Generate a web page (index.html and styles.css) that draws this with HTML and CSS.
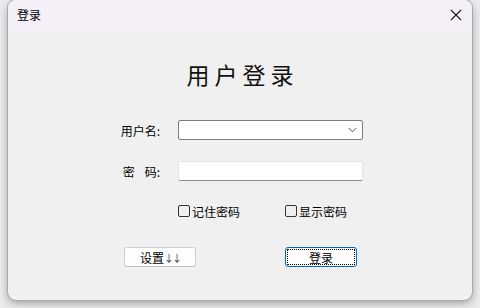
FILE: index.html
```html
<!DOCTYPE html>
<html lang="zh">
<head>
<meta charset="utf-8">
<link rel="stylesheet" href="styles.css">
</head>
<body>
<div class="window">
  <div class="titlebar">
    <span class="title-text">登录</span>
    <svg class="close" width="12" height="12" viewBox="0 0 12 12"><path d="M1 1L11 11M11 1L1 11" stroke="#1a1a1a" stroke-width="1.1"/></svg>
  </div>
  <div class="content">
    <div class="heading">用户登录</div>
    <div class="row row-user">
      <label class="label">用户名:</label>
      <div class="combo">
        <svg class="chev" width="9" height="6" viewBox="0 0 9 6"><path d="M0.5 0.8L4.5 4.8L8.5 0.8" fill="none" stroke="#555" stroke-width="1"/></svg>
      </div>
    </div>
    <div class="row row-pass">
      <label class="label">密<span class="gap"></span>码:</label>
      <div class="input"></div>
    </div>
    <div class="checks">
      <div class="check"><span class="box"></span><span>记住密码</span></div>
      <div class="check check2"><span class="box"></span><span>显示密码</span></div>
    </div>
    <div class="buttons">
      <div class="btn btn-set">设置<span class="arrows">↓↓</span></div>
      <div class="btn btn-login"><span class="focus">登录</span></div>
    </div>
  </div>
</div>
</body>
</html>
```
FILE: styles.css
```css
html, body {
  margin: 0;
  padding: 0;
  background: #ececec;
  width: 480px;
  height: 308px;
  overflow: hidden;
  font-family: "Noto Sans CJK SC", "DejaVu Sans", sans-serif;
}
.window {
  margin-left: 8px;
  width: 464px;
  height: 300px;
  border-radius: 8px;
  background: #f0f0f0;
  box-shadow: 0 0 0 1px #a9a9a9, 0 3px 10px rgba(0,0,0,0.35);
  overflow: hidden;
  display: flex;
  flex-direction: column;
}
.titlebar {
  height: 31px;
  background: #f5eff7;
  display: flex;
  align-items: center;
  justify-content: space-between;
  padding: 0 10px 0 9px;
  flex: none;
}
.title-text {
  font-size: 12px;
  color: #000;
  line-height: 1;
  margin-top: -1px;
}
.close {
  margin-top: -1px;
}
.content {
  flex: 1;
  display: flex;
  flex-direction: column;
}
.heading {
  margin-top: 28px;
  text-align: center;
  font-size: 23px;
  letter-spacing: 5px;
  padding-left: 5px;
  line-height: 30px;
  height: 30px;
  color: #111;
  font-family: "Noto Sans CJK SC", serif;
  font-weight: 400;
}
.row {
  display: flex;
  align-items: center;
  height: 20px;
}
.row-user { margin-top: 31px; }
.row-pass { margin-top: 21px; }
.label {
  width: 152px;
  text-align: right;
  font-size: 12px;
  color: #000;
  margin-right: 18px;
  display: flex;
  justify-content: flex-end;
}
.gap {
  display: inline-block;
  width: 10px;
}
.combo {
  width: 185px;
  height: 20px;
  box-sizing: border-box;
  border: 1px solid #7c7c7c;
  border-radius: 2px;
  background: #fff;
  display: flex;
  align-items: center;
  justify-content: flex-end;
  padding-right: 5px;
}
.chev { display: block; }
.input {
  width: 185px;
  height: 20px;
  box-sizing: border-box;
  background: #fff;
  border: 1px solid #e2e2e2;
  border-bottom-color: #8a8a8a;
  border-radius: 2px;
}
.checks {
  display: flex;
  margin-top: 23px;
  padding-left: 170px;
  height: 14px;
  align-items: center;
}
.check {
  display: flex;
  align-items: center;
  font-size: 12px;
  color: #000;
  width: 107px;
}
.box {
  border: 1px solid #333;
  border-radius: 2px;
  margin-right: 2px;
  box-sizing: border-box;
  width: 12px;
  height: 12px;
}
.buttons {
  display: flex;
  margin-top: 29px;
  padding-left: 116px;
}
.btn {
  height: 20px;
  box-sizing: border-box;
  border-radius: 3px;
  font-size: 12px;
  display: flex;
  align-items: center;
  justify-content: center;
  color: #000;
}
.btn-set {
  width: 72px;
  background: #fdfdfd;
  border: 1px solid #d0d0d0;
  border-bottom-color: #c0c0c0;
}
.arrows {
  font-size: 10px;
  color: #334;
  letter-spacing: -2px;
}
.btn-login {
  margin-left: 89px;
  width: 72px;
  background: #fdfdfd;
  border: 1px solid #0067c0;
  padding: 1px;
}
.focus {
  flex: 1;
  align-self: stretch;
  border: 1px dotted #000;
  display: flex;
  align-items: center;
  justify-content: center;
}
```
